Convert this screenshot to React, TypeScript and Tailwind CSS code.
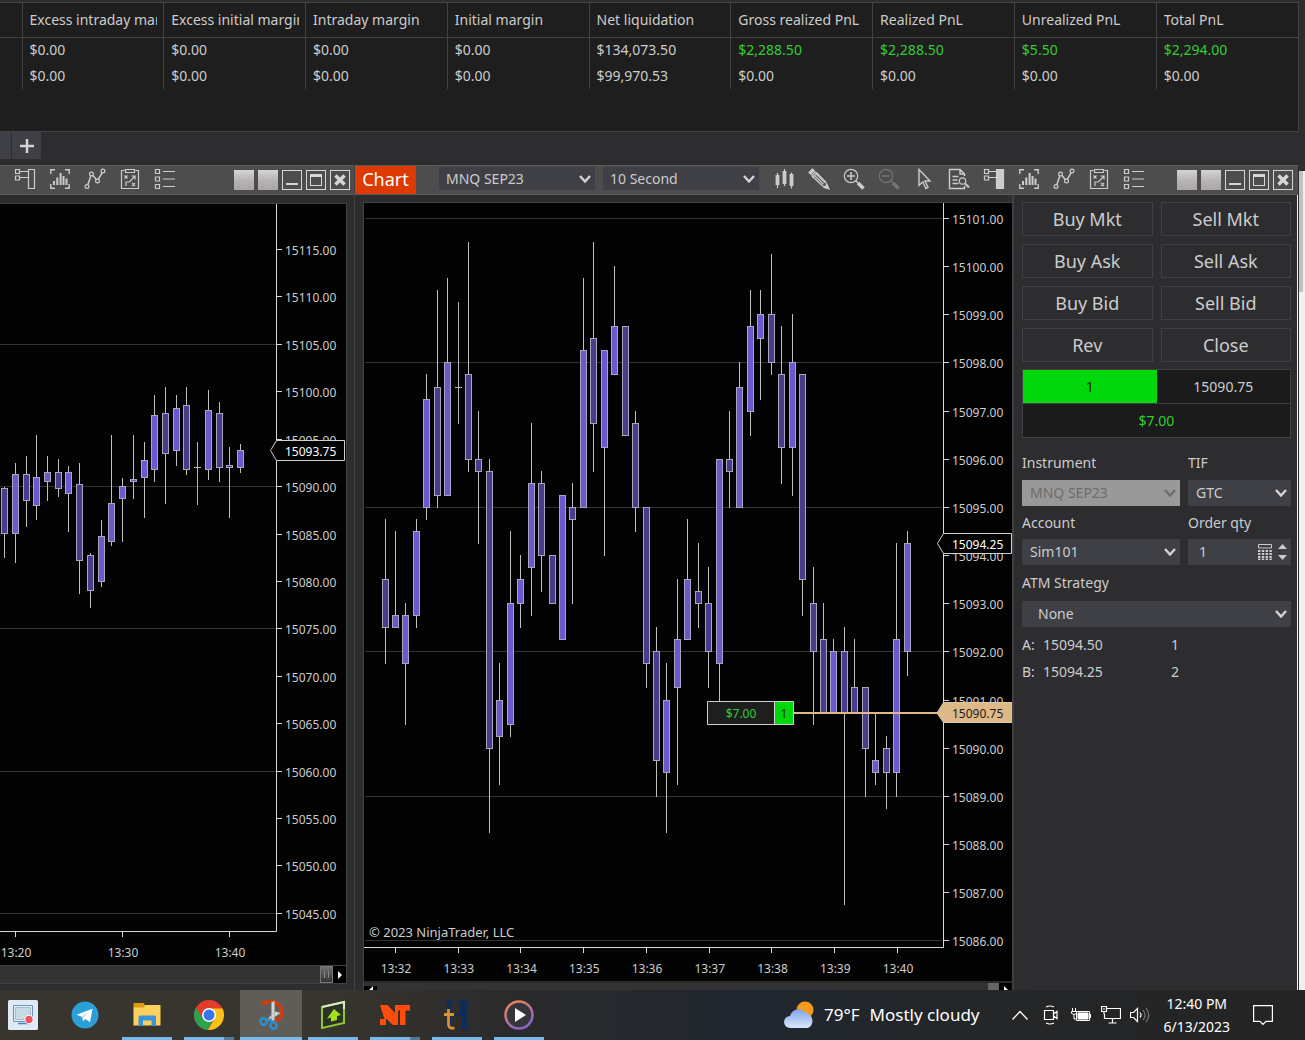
import React from "react";

type Candle = [number, number, number, number, number, number];

const FONT = "font-['Noto_Sans','Open_Sans',sans-serif]";

/* ---------- account table ---------- */

const COLUMNS: { title: string; rows: [string, string]; gain?: boolean }[] = [
  { title: "Excess intraday margin", rows: ["$0.00", "$0.00"] },
  { title: "Excess initial margin", rows: ["$0.00", "$0.00"] },
  { title: "Intraday margin", rows: ["$0.00", "$0.00"] },
  { title: "Initial margin", rows: ["$0.00", "$0.00"] },
  { title: "Net liquidation", rows: ["$134,073.50", "$99,970.53"] },
  { title: "Gross realized PnL", rows: ["$2,288.50", "$0.00"], gain: true },
  { title: "Realized PnL", rows: ["$2,288.50", "$0.00"], gain: true },
  { title: "Unrealized PnL", rows: ["$5.50", "$0.00"], gain: true },
  { title: "Total PnL", rows: ["$2,294.00", "$0.00"], gain: true },
];

function AccountPanel() {
  return (
    <section className="mr-[6px] mt-[2px] h-[130px] border-y border-r border-[#434346] bg-[#1e1e1e]">
      <table className="w-full table-fixed border-collapse text-left text-sm">
        <thead>
          <tr className="h-[34px] border-b border-[#434346]">
            <th className="w-[22px]" aria-label="Account" />
            {COLUMNS.map((c) => (
              <th key={c.title} className="border-l border-[#434346] p-0 pl-[7px] pr-[6px] font-normal">
                <div className="overflow-hidden whitespace-nowrap">{c.title}</div>
              </th>
            ))}
          </tr>
        </thead>
        <tbody>
          {[0, 1].map((r) => (
            <tr key={r} className="h-[26px]">
              <td />
              {COLUMNS.map((c) => (
                <td
                  key={c.title}
                  className={`border-l border-[#434346] p-0 pl-[7px] ${c.gain && r === 0 ? "text-[#32cd32]" : ""}`}
                >
                  {c.rows[r]}
                </td>
              ))}
            </tr>
          ))}
        </tbody>
      </table>
    </section>
  );
}

/* ---------- toolbar icons ---------- */

function Icon({ children, dim }: { children: React.ReactNode; dim?: boolean }) {
  return (
    <svg
      viewBox="0 0 22 22"
      className={`size-[22px] ${dim ? "text-[#757575]" : "text-[#cccccc]"}`}
      fill="none"
      stroke="currentColor"
      strokeWidth="1.2"
    >
      {children}
    </svg>
  );
}

const TraderIcon = ({ filled }: { filled?: boolean }) => (
  <Icon>
    <path d="M1.5 1.5h4v4h-4zM1.5 8h4v4h-4zM6 3.5h8M6 9.5h8" />
    <path d={filled ? "M13.5 1.5h7v19h-7z" : "M14.5 1.5h6v19h-6z"} fill={filled ? "currentColor" : "none"} />
  </Icon>
);
const SeriesIcon = () => (
  <Icon>
    <path d="M1.8 6V1.8H6M16 1.8h4.2V6M1.8 16v4.2H6M16 20.2h4.2V16" strokeWidth="1.4" />
    <path d="M5 13v4M8.3 9.5V17M11.6 5v12M14.5 8v9M17.5 10.5V17" strokeWidth="2" />
  </Icon>
);
const ZigzagIcon = () => (
  <Icon>
    <circle cx="3" cy="18.5" r="1.9" />
    <circle cx="7.5" cy="6" r="1.9" />
    <circle cx="13.5" cy="13" r="1.9" />
    <circle cx="19" cy="3" r="1.9" />
    <path d="M3.8 16.7 6.8 7.9M8.8 7.5l3.6 4M14.4 11.2l3.7-6.4" strokeWidth="1.5" />
  </Icon>
);
const StrategyIcon = () => (
  <Icon>
    <path d="M5.5 2.5h-3v18h17v-18h-3M6.5 1.5h9v3h-9z" />
    <path d="m5.5 7.5 3 3m0-3-3 3M13 15l3 3m0-3-3 3M7 18v-4h3.5l5-5.5M12.5 8H16v3.5" />
  </Icon>
);
const ListIcon = () => (
  <Icon>
    <path d="M1.5 1.5h4v4h-4zM1.5 9h4v4h-4zM1.5 16.5h4v4h-4zM9 3.5h12M9 11h12M9 18.5h12" />
  </Icon>
);
const BarsIcon = () => (
  <Icon>
    <path d="M4.5 5v15M11.5 1v17M18.5 4.5v16" />
    <path d="M4.5 7v10M11.5 3v13M18.500 6v12" strokeWidth="3.8" />
  </Icon>
);
const PencilIcon = () => (
  <Icon>
    <path d="M4.800 8.700l9.500 9 5.700 2.300-2.200-5.900L8.800 4.800M6.500 7.500l9 8.800M8 5.800l9 8.800" />
    <path d="M4.500 1 1 4.500l1.700 1.700 3.500-3.500z" fill="currentColor" />
    <path d="m3.800 7.500 3.500-3.500 1.500 1-4 4z" />
    <path d="M21 21l-5-1.500 3-3z" fill="currentColor" />
  </Icon>
);
const ZoomIcon = ({ out }: { out?: boolean }) => (
  <Icon dim={out}>
    <circle cx="8" cy="8" r="6.7" />
    <path d={out ? "M4 8h8" : "M4 8h8M8 4v8"} strokeWidth="1.5" />
    <path d="m13 13 2 2" />
    <path d="m15 15 5.5 5.5" strokeWidth="3.5" />
  </Icon>
);
const CursorIcon = () => (
  <Icon>
    <path d="M6 1.500v15.800l3.800-3.500 3 6.700 2.200-1-3-6.500h5z" strokeWidth="1.4" />
  </Icon>
);
const FindIcon = () => (
  <Icon>
    <path d="M16.5 8V6L12 1.500H1.500v19h15V18M12 1.500V6h4.500M4.500 8.500h6M4.500 12h5M4.500 15.500h6" strokeWidth="1.4" />
    <circle cx="14.5" cy="13" r="3.2" />
    <path d="m17 15.500 4 4" strokeWidth="2" />
  </Icon>
);

function Tool({ label, children }: { label: string; children: React.ReactNode }) {
  return (
    <button type="button" aria-label={label} className="size-[22px] shrink-0">
      {children}
    </button>
  );
}

function SharedTools({ filled }: { filled?: boolean }) {
  return (
    <>
      <Tool label="Chart trader"><TraderIcon filled={filled} /></Tool>
      <Tool label="Data series"><SeriesIcon /></Tool>
      <Tool label="Indicators"><ZigzagIcon /></Tool>
      <Tool label="Strategies"><StrategyIcon /></Tool>
      <Tool label="Properties"><ListIcon /></Tool>
    </>
  );
}

function WindowButtons() {
  const box = "grid size-5 place-items-center border border-[#d6d6d6]";
  return (
    <div className="ml-auto flex shrink-0 gap-1 pt-[2px]">
      <button type="button" aria-label="Instrument link" className="size-5 bg-gradient-to-b from-[#d6d4d4] via-[#b9b5b6] to-[#aaa6a7]" />
      <button type="button" aria-label="Interval link" className="size-5 bg-gradient-to-b from-[#d6d4d4] via-[#b9b5b6] to-[#aaa6a7]" />
      <button type="button" aria-label="Minimize" className={box}>
        <span className="mt-2 h-[2px] w-3 bg-[#d6d6d6]" />
      </button>
      <button type="button" aria-label="Maximize" className={box}>
        <span className="h-3 w-3 border border-t-[3px] border-[#d6d6d6]" />
      </button>
      <button type="button" aria-label="Close" className={box}>
        <svg viewBox="0 0 12 12" className="size-3" stroke="#d6d6d6" strokeWidth="3.5">
          <path d="m1.500 1.500 9 9m0-9-9 9" />
        </svg>
      </button>
    </div>
  );
}

/* ---------- charts ---------- */

function Candles({ data }: { data: Candle[] }) {
  return (
    <g>
      {data.map(([x, hi, top, bot, lo, up]) => (
        <g key={x} stroke="#b4b4b4">
          <path d={`M${x + 0.5} ${hi}V${top}M${x + 0.5} ${bot}V${lo + 1}`} stroke="#c0c0b8" />
          {top === bot ? (
            <path d={`M${x - 3} ${top + 0.5}h7M${x + 0.5} ${hi}V${lo}`} />
          ) : (
            <rect x={x - 2.5} y={top + 0.5} width="6" height={bot - top} fill={up ? "#6a5acd" : "#483d8b"} stroke="#a9a5bd" />
          )}
        </g>
      ))}
    </g>
  );
}

const LEFT_CANDLES: Candle[] = [
  [4, 487, 488, 533, 557, 0], [15, 463, 474, 533, 562, 1], [26, 456, 474, 500, 526, 0],
  [36, 435, 477, 505, 519, 1], [47, 456, 472, 481, 500, 1], [58, 459, 472, 488, 496, 0],
  [68, 466, 472, 493, 531, 1], [79, 463, 484, 560, 593, 0], [90, 553, 555, 590, 607, 0],
  [101, 520, 536, 581, 586, 1], [111, 435, 503, 541, 545, 1], [122, 478, 486, 498, 541, 1],
  [133, 435, 479, 481, 498, 1], [144, 442, 460, 477, 517, 1], [154, 395, 415, 469, 481, 1],
  [165, 387, 413, 453, 503, 0], [176, 395, 408, 450, 465, 1], [186, 387, 405, 469, 474, 0],
  [197, 442, 467, 467, 504, 0], [208, 390, 410, 469, 479, 1], [219, 402, 413, 467, 481, 0],
  [229, 447, 465, 467, 517, 0], [240, 444, 450, 467, 472, 1],
];

const leftY = (p: number) => Math.round(249 + (15115 - p) * 9.484);

function LeftChart() {
  const prices = Array.from({ length: 15 }, (_, i) => 15115 - i * 5);
  return (
    <svg viewBox="0 204 346 761" preserveAspectRatio="xMaxYMin slice" className="min-h-0 w-full flex-1 bg-[#030303] text-[12px]" fill="#cccccc" role="img" aria-label="MNQ minute chart">
      {[15105, 15090, 15075, 15060, 15045].map((p) => (
        <path key={p} d={`M0 ${leftY(p) + 0.5}H276`} stroke="#333333" />
      ))}
      <path d="M276.5 204V931.5H0" fill="none" stroke="#d8d8d8" />
      {prices.map((p) => (
        <g key={p}>
          <path d={`M277 ${leftY(p) + 0.5}h5`} stroke="#d8d8d8" />
          <text x="285" y={leftY(p) + 6}>{p.toFixed(2)}</text>
        </g>
      ))}
      {["13:20", "13:30", "13:40"].map((t, i) => (
        <g key={t}>
          <path d={`M${15.5 + i * 107} 932v5`} stroke="#d8d8d8" />
          <text x={16 + i * 107} y="957" textAnchor="middle">{t}</text>
        </g>
      ))}
      <Candles data={LEFT_CANDLES} />
      <path d="M270.5 450.5 276.5 440.5H344.5V460.5H276.5Z" fill="#030303" stroke="#d0d0d0" />
      <text x="285" y="456" fill="#ffffff">15093.75</text>
    </svg>
  );
}

/* high, body top, body bottom, low (points above 15000), rising */
const TEN_SECOND: [number, number, number, number, number][] = [
  [94.75, 93.5, 92.5, 91.75, 0], [94.5, 92.75, 92.5, 92.5, 1], [93, 92.75, 91.75, 90.5, 1],
  [94.75, 94.5, 92.75, 92.5, 1], [97.75, 97.25, 95, 94.75, 1], [99.5, 97.5, 95.25, 95, 0],
  [99.75, 98, 95.25, 95.25, 1], [99.25, 97.5, 97.5, 96.75, 0], [100.5, 97.75, 96, 95.75, 0],
  [97, 96, 95.75, 94.25, 0], [96, 95.75, 90, 88.25, 0], [91.75, 91, 90.25, 89.25, 1],
  [94.5, 93, 90.5, 90.25, 1], [94, 93.5, 93, 92.5, 1], [96.75, 95.5, 93.75, 92.75, 1],
  [95.75, 95.5, 94, 93.25, 0], [94, 94, 93, 93, 0], [95.25, 95.25, 92.25, 92.25, 1],
  [95.5, 95, 94.75, 93, 0], [99.75, 98.25, 95, 95, 1], [100.5, 98.5, 96.75, 95.75, 0],
  [98.25, 98.25, 96.25, 94, 1], [100, 98.75, 97.75, 97.75, 1], [98.75, 98.75, 96.5, 96.5, 0],
  [97, 96.75, 95, 94.5, 0], [95, 95, 91.75, 91.25, 0], [92.5, 92, 89.75, 89, 0],
  [91.75, 91, 89.5, 88.25, 1], [93.5, 92.25, 91.25, 89.25, 1], [94.75, 93.5, 92.25, 92.25, 1],
  [94.25, 93.25, 93, 92.5, 0], [93.75, 93, 92, 91.25, 0], [96, 96, 91.75, 90.75, 1],
  [97, 96, 95.75, 95, 0], [98, 97.5, 95, 95, 1], [99.5, 98.75, 97, 96.5, 1],
  [99.5, 99, 98.5, 97.25, 1], [100.25, 99, 98, 97.75, 0], [98.75, 97.75, 96.25, 95.5, 0],
  [99, 98, 96.25, 95.25, 1], [97.75, 97.75, 93.5, 92.75, 0], [93.75, 93, 92, 90.5, 0],
  [93, 92.25, 90.75, 90.75, 0], [92.25, 92, 90.75, 90.75, 1], [92.5, 92, 90.75, 86.75, 0],
  [92.25, 91.25, 90.75, 90.75, 0], [91.25, 91.25, 90, 89, 0], [90.75, 89.75, 89.5, 89.25, 1],
  [90.25, 90, 89.5, 88.75, 0], [94.25, 92.25, 89.5, 89, 1], [94.5, 94.25, 92, 91.5, 1],
];

const rightY = (p: number) => Math.round(218 + (101 - p) * 48.15);
const RIGHT_CANDLES: Candle[] = TEN_SECOND.map(([h, t, b, l, up], i) => [
  Math.floor(385 + i * 10.44), rightY(h), rightY(t), rightY(b), rightY(l), up,
]);

function RightChart() {
  return (
    <svg viewBox="364 203 648 778" preserveAspectRatio="xMaxYMin slice" className="min-h-0 w-full flex-1 bg-[#030303] text-[12px]" fill="#cccccc" role="img" aria-label="MNQ 10 second chart">
      {[101, 98, 95, 92, 89, 86].map((p) => (
        <path key={p} d={`M365 ${rightY(p) + 0.5}H942`} stroke="#333333" />
      ))}
      <path d="M943.5 203V947.5H364" fill="none" stroke="#d8d8d8" />
      {Array.from({ length: 16 }, (_, i) => 101 - i).map((p) => (
        <g key={p}>
          <path d={`M944 ${rightY(p) + 0.5}h5`} stroke="#d8d8d8" />
          <text x="952" y={rightY(p) + 6}>{(15000 + p).toFixed(2)}</text>
        </g>
      ))}
      {Array.from({ length: 9 }, (_, i) => i).map((i) => (
        <g key={i}>
          <path d={`M${Math.floor(395.5 + i * 62.7) + 0.5} 948v5`} stroke="#d8d8d8" />
          <text x={396 + i * 62.75} y="973" textAnchor="middle">{`13:${32 + i}`}</text>
        </g>
      ))}
      <Candles data={RIGHT_CANDLES} />
      <text x="369" y="937" className="text-[13px]">© 2023 NinjaTrader, LLC</text>
      <path d="M794 713H938" stroke="#deb887" strokeWidth="2" />
      <path d="M707.5 701.5h67v23h-67z" fill="#1e1e1e" stroke="#d0d0d0" />
      <path d="M774.5 701.5h19v23h-19z" fill="#00d80b" stroke="#d0d0d0" />
      <text x="741" y="718" textAnchor="middle" fill="#32cd32">$7.00</text>
      <text x="784" y="718" textAnchor="middle" fill="#123012">1</text>
      <path d="M937.5 543.5 943.5 533.5H1011.5V553.5H943.5Z" fill="#030303" stroke="#d0d0d0" />
      <text x="952" y="549" fill="#ffffff">15094.25</text>
      <path d="M937 713 943.5 702.5H1012V722.5H943.5Z" fill="#deb887" stroke="#d8c8b0" />
      <text x="952" y="718" fill="#1a1a1a">15090.75</text>
    </svg>
  );
}

/* ---------- form controls ---------- */

function Chevron({ color }: { color: string }) {
  return (
    <svg viewBox="0 0 12 8" className="pointer-events-none absolute right-1 top-1/2 h-2 w-3 -translate-y-1/2" fill="none" stroke={color} strokeWidth="2.4">
      <path d="m1 1 5 5.500L11 1" />
    </svg>
  );
}

function Dropdown({ id, value, label, disabled, indent, slim }: { id: string; value: string; label?: string; disabled?: boolean; indent?: boolean; slim?: boolean }) {
  return (
    <div className="relative">
      <select
        id={id}
        aria-label={label}
        disabled={disabled}
        className={`block w-full appearance-none pr-6 text-sm opacity-100 ${slim ? "h-[23px] leading-5" : "h-[26px]"} ${
          indent ? "pl-4" : slim ? "pl-[7px]" : "pl-2"
        } ${disabled ? "bg-[#999999] text-[#6d6d6d]" : "bg-[#3f3f46] text-[#cccccc]"}`}
      >
        <option>{value}</option>
      </select>
      <Chevron color={disabled ? "#6d6d6d" : "#d4d4d4"} />
    </div>
  );
}

function OrderPanel() {
  const actions = ["Buy Mkt", "Sell Mkt", "Buy Ask", "Sell Ask", "Buy Bid", "Sell Bid", "Rev", "Close"];
  return (
    <aside className="w-[286px] shrink-0 border-l-2 border-r border-l-[#3f3f42] border-r-[#f0f0f0] pl-2 pr-[6px] pt-[7px]">
      <div className="grid grid-cols-2 gap-2">
        {actions.map((a) => (
          <button key={a} type="button" className="h-[34px] border border-[#3f3f46] text-lg leading-none">
            {a}
          </button>
        ))}
      </div>
      <div className="mt-[7px] grid grid-cols-2 border border-[#3f3f46] bg-[#1b1b1c] text-center text-sm leading-[33px]">
        <div className="bg-[#00d80b] text-[#0c240c]">1</div>
        <div>15090.75</div>
        <div className="col-span-2 border-t border-[#3f3f46] text-[#32cd32]">$7.00</div>
      </div>
      <div className="mt-[15px] grid grid-cols-[158fr_103fr] gap-x-2 text-sm leading-5">
        <label htmlFor="instrument" className="mb-[7px]">Instrument</label>
        <label htmlFor="tif" className="mb-[7px]">TIF</label>
        <Dropdown id="instrument" value="MNQ SEP23" disabled />
        <Dropdown id="tif" value="GTC" />
        <label htmlFor="account" className="mb-[6px] mt-[7px]">Account</label>
        <label htmlFor="qty" className="mb-[6px] mt-[7px]">Order qty</label>
        <Dropdown id="account" value="Sim101" />
        <div className="flex h-[26px] items-center bg-[#3f3f46] pr-1">
          <input id="qty" type="text" defaultValue="1" className="w-0 flex-1 bg-transparent pl-[11px]" />
          <button type="button" aria-label="Calculator">
            <svg viewBox="0 0 14 16" className="h-4 w-[14px]" stroke="#cccccc" fill="none">
              <path d="M.5.5h13v3.500H.500z" />
              <path d="M0 7h14M0 10h14M0 13h14M0 15.500h14" strokeWidth="2" strokeDasharray="2.4 1.4" />
            </svg>
          </button>
          <div className="ml-[6px] flex flex-col gap-[6px]">
            <button type="button" aria-label="Increase">
              <svg viewBox="0 0 9 5" className="h-[5px] w-[9px]" fill="#cccccc"><path d="M4.500 0 9 5H0z" /></svg>
            </button>
            <button type="button" aria-label="Decrease">
              <svg viewBox="0 0 9 5" className="h-[5px] w-[9px]" fill="#cccccc"><path d="M4.500 5 9 0H0z" /></svg>
            </button>
          </div>
        </div>
      </div>
      <div className="mt-2 text-sm leading-5">
        <label htmlFor="atm" className="mb-2 block">ATM Strategy</label>
        <Dropdown id="atm" value="None" indent />
        <dl className="mt-2 grid grid-cols-[21px_128px_auto] gap-y-[7px]">
          <dt>A:</dt><dd>15094.50</dd><dd>1</dd>
          <dt>B:</dt><dd>15094.25</dd><dd>2</dd>
        </dl>
      </div>
    </aside>
  );
}

/* ---------- windows ---------- */

const TOOLBAR = "flex h-[30px] shrink-0 items-center border-y border-[#5a5a5c] bg-[#4d4d4d] pb-[2px]";

function ScrollArrow({ left }: { left?: boolean }) {
  return (
    <button type="button" aria-label={left ? "Scroll left" : "Scroll right"} className="grid w-[13px] place-items-center bg-black">
      <svg viewBox="0 0 4 8" className="h-2 w-1" fill="#ffffff"><path d={left ? "M4 0v8L0 4z" : "M0 0v8l4-4z"} /></svg>
    </button>
  );
}

function LeftWindow() {
  return (
    <section className="flex w-[355px] shrink-0 flex-col border-r border-[#434346]">
      <div className={`${TOOLBAR} pl-[14px] pr-1`}>
        <div className="flex gap-[13px]"><SharedTools /></div>
        <WindowButtons />
      </div>
      <div className="mb-[6px] mr-[7px] mt-2 flex min-h-0 flex-1 flex-col border-r border-t border-[#434346]">
        <LeftChart />
        <div className="flex h-[19px] shrink-0 border-b border-t border-[#3f3f42] bg-[#333333]">
          <div className="ml-auto flex w-[13px] justify-center gap-[3px] border border-[#777777] bg-gradient-to-b from-[#707070] to-[#333333] py-1">
            <span className="w-px bg-[#8a8a8a]" /><span className="w-px bg-[#8a8a8a]" />
          </div>
          <ScrollArrow />
        </div>
      </div>
    </section>
  );
}

function RightWindow() {
  return (
    <section className="flex min-w-0 flex-1 flex-col">
      <div className={`${TOOLBAR} pr-[5px]`}>
        <h1 className="h-7 w-[61px] shrink-0 self-start bg-[#dc3a00] text-center text-lg leading-[27px] text-white">Chart</h1>
        <div className="ml-[23px] grid shrink-0 grid-cols-[156px_156px] gap-2 pb-px">
          <Dropdown id="symbol" label="Symbol" value="MNQ SEP23" slim />
          <Dropdown id="interval" label="Interval" value="10 Second" slim />
        </div>
        <div className="ml-[14px] flex gap-[13px]">
          <Tool label="Bar style"><BarsIcon /></Tool>
          <Tool label="Drawing tools"><PencilIcon /></Tool>
          <Tool label="Zoom in"><ZoomIcon /></Tool>
          <Tool label="Zoom out"><ZoomIcon out /></Tool>
          <Tool label="Cursor"><CursorIcon /></Tool>
          <Tool label="Data box"><FindIcon /></Tool>
          <SharedTools filled />
        </div>
        <WindowButtons />
      </div>
      <div className="flex min-h-0 flex-1">
        <div className="ml-2 mt-[7px] flex min-w-0 flex-1 flex-col border-l border-t border-[#434346]">
          <RightChart />
          <div className="flex h-[9px] shrink-0 items-start overflow-hidden border-t-2 border-[#2a2a2a] bg-[#333333]">
            <div className="pt-[3px]"><ScrollArrow left /></div>
            <div className="ml-auto h-full w-[11px] bg-[#666666]" />
            <div className="bg-black pt-[3px]"><ScrollArrow /></div>
          </div>
        </div>
        <OrderPanel />
      </div>
    </section>
  );
}

/* ---------- taskbar ---------- */

const APPS: { name: string; line?: "full" | "split"; active?: boolean; art: React.ReactNode }[] = [
  {
    name: "Screen recorder",
    art: (
      <>
        <rect width="30" height="30" rx="1.5" fill="#dfeaf7" />
        <path d="M5.500 5.500h19v16h-19z" fill="#e6eef2" stroke="#6c93b8" />
        <path d="M7.500 7.500h15v12h-15z" fill="#c9dbe2" stroke="#a5bccb" />
        <path d="M10 23.500h11" stroke="#4f80b0" strokeWidth="1.5" />
        <circle cx="21" cy="19.500" r="4.500" fill="#ffffff" />
        <circle cx="21" cy="19.500" r="3.700" fill="#f2535c" />
      </>
    ),
  },
  {
    name: "Telegram",
    art: (
      <>
        <circle cx="15" cy="15" r="13.500" fill="#2a9fd8" />
        <path d="m6.500 14.800 16-6-2.500 13.500-4.500-3.300-2.500 2.300v-4z" fill="#ffffff" />
        <path d="m11.500 16.500 7.500-5-6 6.300v3.500z" fill="#b8dcef" />
      </>
    ),
  },
  {
    name: "File Explorer",
    line: "full",
    art: (
      <>
        <path d="M1.500 3h10l2 2.500V9h-12z" fill="#d99b10" />
        <path d="M1.500 7.500h10l2-2.500h15v20.500h-27z" fill="#fbd05c" />
        <path d="M6.500 26V17q0-1.500 1.500-1.500h14.500q1.500 0 1.500 1.500v9h-4.500v-5.500h-8.500V26z" fill="#3a95d8" />
      </>
    ),
  },
  {
    name: "Chrome",
    line: "split",
    art: (
      <>
        <circle cx="15" cy="15" r="15" fill="#e33b2e" />
        <path d="M2 7.500 8.500 18.500 18 21.500 14 30A15 15 0 0 1 2 7.500z" fill="#2ba24c" />
        <path d="M15 8.500h13.500A15 15 0 0 1 14 30l7-12z" fill="#fbc116" />
        <circle cx="15" cy="15" r="7" fill="#ffffff" />
        <circle cx="15" cy="15" r="5.500" fill="#3377e8" />
      </>
    ),
  },
  {
    name: "Snipping Tool",
    line: "full",
    active: true,
    art: (
      <>
        <path d="M6 4Q13-.5 19.500 2.500T25.500 13 17 22" fill="none" stroke="#c93d10" strokeWidth="4" />
        <path d="M15.500 2.500 18.500 1v19l-3 1zM24.500 13l-13 8.500 1.500-4 6-6z" fill="#d5d5d5" stroke="#a0a0a0" strokeWidth=".5" />
        <circle cx="7.500" cy="21.500" r="3.200" fill="none" stroke="#2c8ed0" strokeWidth="2.500" />
        <circle cx="17.500" cy="25.500" r="3.200" fill="none" stroke="#2c8ed0" strokeWidth="2.500" />
        <path d="m10.500 21 4-1.500 2 3" fill="none" stroke="#2c8ed0" strokeWidth="2" />
      </>
    ),
  },
  {
    name: "Upload tool",
    line: "full",
    art: (
      <>
        <path d="m4 7 22-5v21L4 28z" fill="#2c3326" stroke="#8fc52e" strokeWidth="2" />
        <path d="m4 7 22-5v7" fill="none" stroke="#d8e8c8" strokeWidth="2" />
        <path d="m16 9 7 6-4 1v4l-6 1.500v-4l-4 1z" fill="#a4e01c" />
      </>
    ),
  },
  {
    name: "NinjaTrader",
    line: "split",
    art: <path d="M0 5h7.500l7.500 8V5h15v5.500h-4.500V25H20V10.500h-2V25h-5L6 18.500V25H0v-6h4.500z" fill="#ff4b0c" />,
  },
  {
    name: "Trading hub",
    line: "full",
    art: (
      <>
        <path d="M3 0h8v1.500l-2 1V14h9V2.500l-2-1V0h11v1.500l-2 1V28l2 1v1h-9v-1l2-1V16H9v14H5V2.500l-2-1z" fill="#0f2c58" />
        <path d="M6.500 9v16q.5 4 6 3M2 14.500h10" fill="none" stroke="#d8922e" strokeWidth="2.8" />
      </>
    ),
  },
  {
    name: "Media Player",
    line: "full",
    art: (
      <>
        <defs>
          <linearGradient id="ring" x2=".6" y2="1">
            <stop stopColor="#f58a4b" />
            <stop offset="1" stopColor="#8a63c9" />
          </linearGradient>
        </defs>
        <circle cx="15" cy="15" r="13.500" fill="#35353c" stroke="url(#ring)" strokeWidth="2.5" />
        <path d="m11 8 11 7-11 7z" fill="#ffffff" />
      </>
    ),
  },
];

function Taskbar() {
  return (
    <footer className="flex h-[50px] shrink-0 items-center bg-[linear-gradient(90deg,#38352e_0%,#38352e_25%,#2a2a2c_40%,#20272f_58%,#242628_75%,#242424_100%)] text-white">
      <nav className="-ml-2 flex h-full shrink-0">
        {APPS.map((a) => (
          <button key={a.name} type="button" aria-label={a.name} className={`relative grid h-full w-[62px] place-items-center ${a.active ? "bg-[#5f5d57]" : ""}`}>
            <svg viewBox="0 0 30 30" className="size-[30px]">{a.art}</svg>
            {a.line && (
              <span className={`absolute bottom-0 flex h-[3px] ${a.active ? "inset-x-0" : "inset-x-[6px]"}`}>
                <span className="flex-1 bg-[#76b9ed]" />
                {a.line === "split" && <span className="w-[10px] bg-[#54799a]" />}
              </span>
            )}
          </button>
        ))}
      </nav>
      <div className="ml-auto flex shrink-0 items-center">
        <svg viewBox="0 0 32 28" className="h-7 w-8">
          <defs>
            <linearGradient id="cloud" x2="0" y2="1">
              <stop stopColor="#7fa6ea" />
              <stop offset="1" stopColor="#d8e5fa" />
            </linearGradient>
          </defs>
          <circle cx="22" cy="9" r="8.500" fill="#f59a1c" />
          <path d="M7 27a6 6 0 0 1 0-12 9 9 0 0 1 16-3 8 8 0 0 1 2 15z" fill="url(#cloud)" />
        </svg>
        <p className="ml-[9px] flex gap-[10px] text-[17px]"><span>79°F</span><span>Mostly cloudy</span></p>
        <svg viewBox="0 0 16 10" className="ml-8 h-[10px] w-4" fill="none" stroke="#ffffff" strokeWidth="1.3"><path d="m.5 9.500 7.500-8 7.500 8" /></svg>
        <svg viewBox="0 0 16 20" className="ml-[15px] h-5 w-4" fill="none" stroke="#ffffff" strokeWidth="1.2">
          <path d="M1.500 5.500h9v9h-9zM10.500 9l3.500-2.500v7L10.500 11M3 2q4-2 8 0M3 18q4 2 8 0" />
        </svg>
        <svg viewBox="0 0 20 14" className="ml-3 h-[14px] w-5" fill="none" stroke="#ffffff">
          <path d="M5.500 3.500h13v9h-13zM19.500 6v4M1.500 0v3M4.500 0v3M.500 3.500h5v2q-2.500 2-5 0zM3 7v4h3" />
          <path d="M7 5h10v6H7z" fill="#ffffff" />
        </svg>
        <svg viewBox="0 0 20 18" className="ml-[10px] h-[18px] w-5" fill="none" stroke="#ffffff" strokeWidth="1.2">
          <path d="M6 2.500h13.500v10H3.500V8M11.500 13v4M7.500 17h8M.500.500h5v5h-5zM2 3h2M3 5v3" />
        </svg>
        <svg viewBox="0 0 20 18" className="ml-[9px] h-[18px] w-5" fill="none" stroke="#ffffff" strokeWidth="1.2">
          <path d="M.500 6.500h3l4-4v13l-4-4h-3zM10 6.500q2 2.500 0 5" />
          <path d="M13 4q4 5 0 10M16 2q5.500 7 0 14" stroke="#777777" />
        </svg>
        <p className="ml-[14px] text-center text-sm leading-[23px]">12:40 PM<br />6/13/2023</p>
        <svg viewBox="0 0 20 21" className="ml-[23px] mr-8 h-[21px] w-5" fill="none" stroke="#ffffff" strokeWidth="1.2">
          <path d="M.600.600h18.800v15.800h-6.400l-3 3-3-3H.600z" />
        </svg>
      </div>
    </footer>
  );
}

export default function App() {
  return (
    <div className={`flex h-screen flex-col overflow-hidden bg-[#2d2d30] text-[#cccccc] ${FONT}`}>
      <AccountPanel />
      <div className="flex h-[33px] shrink-0 items-start gap-px">
        <button type="button" aria-label="Accounts tab" className="h-[27px] w-[11px] bg-[#3f3f46]" />
        <button type="button" aria-label="Add tab" className="grid h-[27px] w-[29px] place-items-center bg-[#3f3f46]">
          <svg viewBox="0 0 14 14" className="size-[14px]" stroke="#d4d4d4" strokeWidth="2.4"><path d="M7 0v14M0 7h14" /></svg>
        </button>
      </div>
      <main className="flex min-h-0 flex-1">
        <LeftWindow />
        <RightWindow />
        <div className="w-[7px] shrink-0 pt-[6px]">
          <div className="h-full border-l border-[#2d2d30] bg-[#f0f0f0]">
            <div className="h-[121px] w-1 bg-[#c2c2c2]" />
          </div>
        </div>
      </main>
      <Taskbar />
    </div>
  );
}
